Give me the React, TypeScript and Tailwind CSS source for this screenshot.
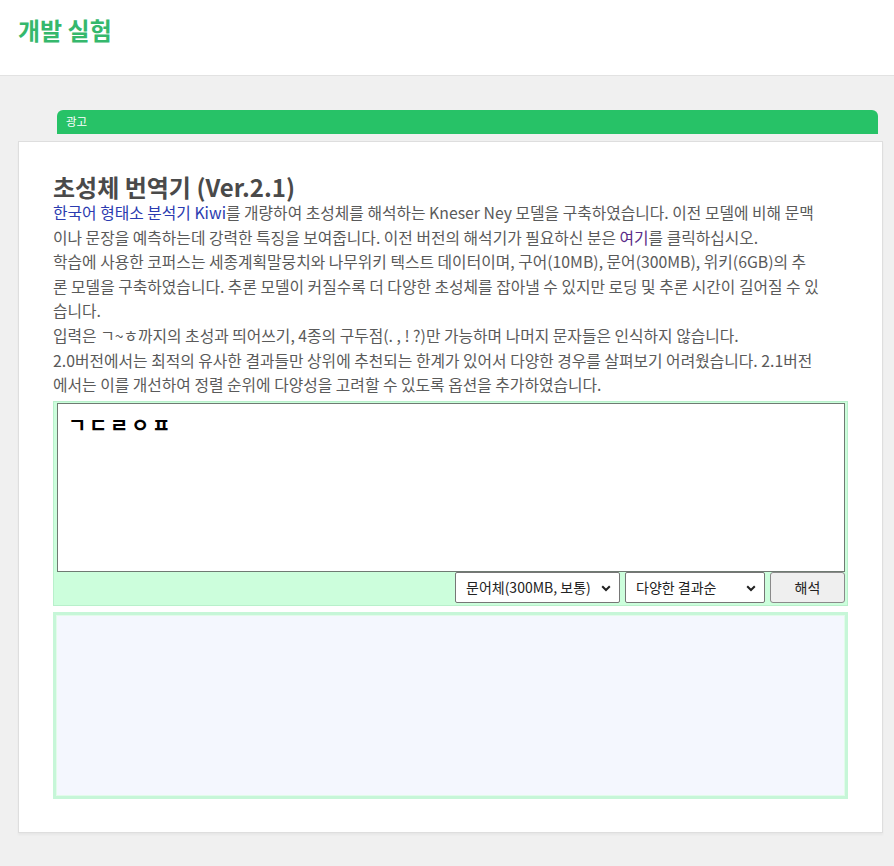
import React from "react";

const font = { fontFamily: '"Noto Sans CJK KR", "Noto Sans", sans-serif' };

function Chevron() {
  return (
    <svg width="10" height="7" viewBox="0 0 10 7" className="pointer-events-none absolute right-[9px] top-[13px]">
      <path d="M1.2 1.2 L5 5 L8.8 1.2" fill="none" stroke="#222" strokeWidth="2" />
    </svg>
  );
}

export default function App() {
  return (
    <div className="min-h-[866px] w-[894px] bg-[#f0f0f0]" style={font}>
      <header className="h-[76px] border-b border-[#e2e2e2] bg-white pl-[18px] pt-[13px]">
        <h1 className="text-[24px] font-bold leading-[34px] text-[#35b86c]">개발 실험</h1>
      </header>

      <div className="ml-[57px] mr-[16px] mt-[34px] flex h-[24px] items-center rounded-t-[6px] bg-[#27c267] pl-[9px]">
        <span className="text-[11.5px] leading-none text-white">광고</span>
      </div>

      <div className="ml-[18px] mt-[7px] w-[865px] border border-[#dedede] bg-white px-[34px] pb-[33px] pt-[30px] shadow-[0_2px_2px_rgba(0,0,0,0.04)]">
        <h2 className="text-[24px] font-bold leading-[29px] text-[#4a4a4a]">초성체 번역기 (Ver.2.1)</h2>
        <div className="whitespace-nowrap text-[15.8px] leading-[24.6px] text-[#5a5a5a]">
          <p>
            <a className="text-[#2b3bb0]">한국어 형태소 분석기 Kiwi</a>를 개량하여 초성체를 해석하는 Kneser Ney 모델을 구축하였습니다. 이전 모델에 비해 문맥
            <br />
            이나 문장을 예측하는데 강력한 특징을 보여줍니다. 이전 버전의 해석기가 필요하신 분은 <a className="text-[#5a2d88]">여기</a>를 클릭하십시오.
          </p>
          <p>
            학습에 사용한 코퍼스는 세종계획말뭉치와 나무위키 텍스트 데이터이며, 구어(10MB), 문어(300MB), 위키(6GB)의 추
            <br />
            론 모델을 구축하였습니다. 추론 모델이 커질수록 더 다양한 초성체를 잡아낼 수 있지만 로딩 및 추론 시간이 길어질 수 있
            <br />
            습니다.
          </p>
          <p>입력은 ㄱ~ㅎ까지의 초성과 띄어쓰기, 4종의 구두점(. , ! ?)만 가능하며 나머지 문자들은 인식하지 않습니다.</p>
          <p>
            2.0버전에서는 최적의 유사한 결과들만 상위에 추천되는 한계가 있어서 다양한 경우를 살펴보기 어려웠습니다. 2.1버전
            <br />
            에서는 이를 개선하여 정렬 순위에 다양성을 고려할 수 있도록 옵션을 추가하였습니다.
          </p>
        </div>

        <div className="mt-[3px] border border-[#b8f0cb] bg-[#ccfedc] pb-[2px] pl-[3px] pr-[2px] pt-[1px]">
          <textarea
            className="block h-[169px] w-full resize-none border border-[#6f7a72] bg-white px-[10px] pt-[6px] text-[20px] font-bold leading-[29px] tracking-[2.6px] text-black outline-none"
            style={font}
            defaultValue="ㄱㄷㄹㅇㅍ"
          />
          <div className="flex h-[31px] justify-end gap-[5px]">
            <div className="relative w-[165px]">
              <select
                className="h-full w-full appearance-none rounded-[2px] border border-[#767676] bg-white pl-[10px] text-[14px] text-[#222] outline-none"
                style={font}
                defaultValue="a"
              >
                <option value="a">문어체(300MB, 보통)</option>
              </select>
              <Chevron />
            </div>
            <div className="relative w-[140px]">
              <select
                className="h-full w-full appearance-none rounded-[2px] border border-[#767676] bg-white pl-[10px] text-[14px] text-[#222] outline-none"
                style={font}
                defaultValue="b"
              >
                <option value="b">다양한 결과순</option>
              </select>
              <Chevron />
            </div>
            <button
              className="w-[75px] rounded-[3px] border border-[#8a8a8a] bg-[#efefef] text-[14px] text-[#222]"
              style={font}
            >
              해석
            </button>
          </div>
        </div>

        <div className="mt-[6px] h-[187px] border-[3px] border-[#c6f6d8] bg-[#f4f7fe] shadow-[inset_0_0_0_1px_#e2fbea]" />
      </div>
    </div>
  );
}
